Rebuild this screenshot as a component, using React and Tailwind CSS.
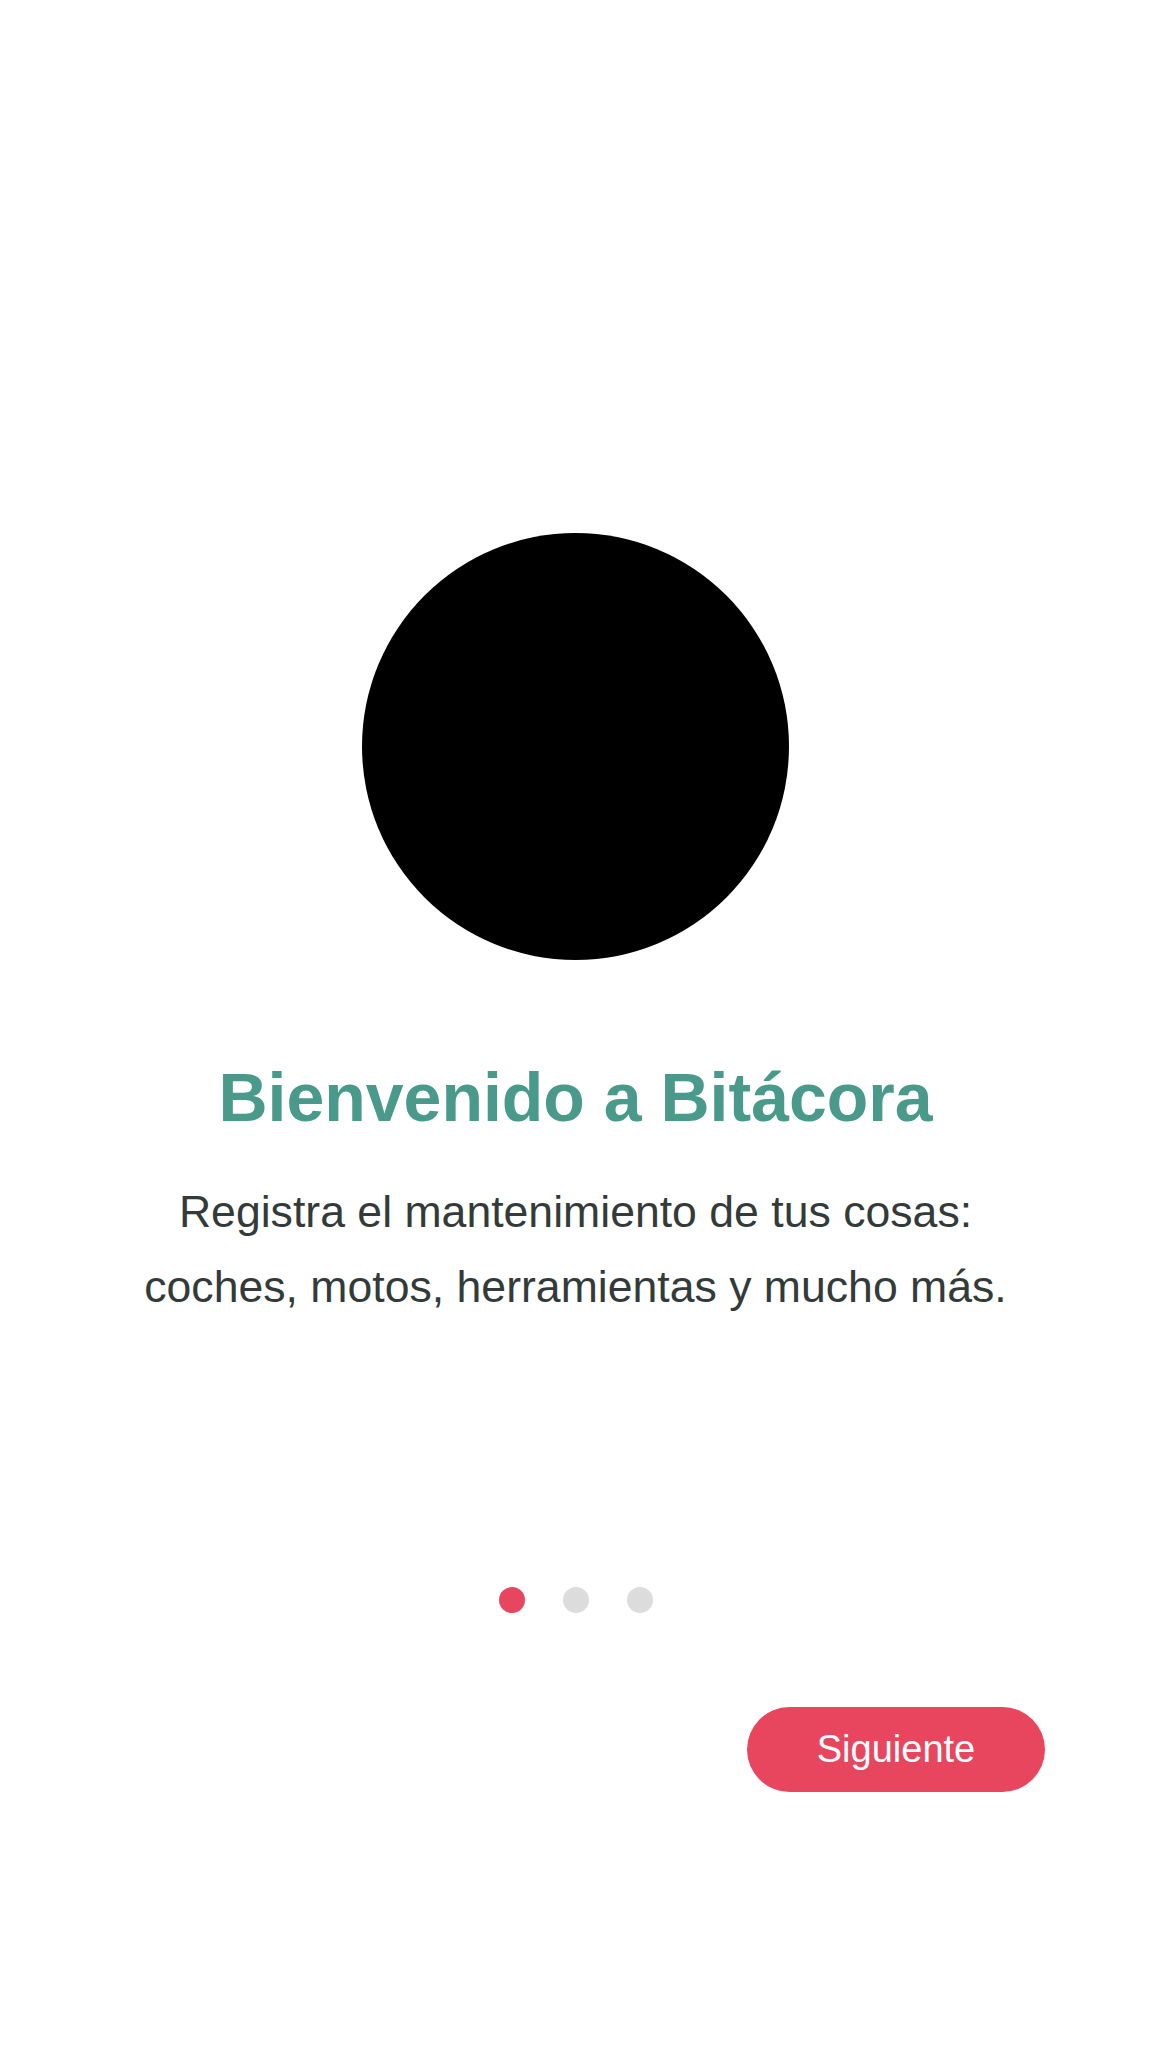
import React from 'react';

function Dots({ active = 0, count = 3 }) {
  return (
    <div className="flex justify-center gap-[38px]">
      {Array.from({ length: count }).map((_, i) => (
        <span
          key={i}
          className={
            i === active
              ? 'block w-[26px] h-[26px] rounded-full bg-[#e8465f]'
              : 'block w-[26px] h-[26px] rounded-full bg-[#dcdcdc]'
          }
        />
      ))}
    </div>
  );
}

export default function App() {
  return (
    <div
      className="w-full h-[2047px] bg-white flex flex-col items-stretch"
      style={{ fontFamily: '"Liberation Sans", Arial, sans-serif' }}
    >
      {/* Slide */}
      <div className="flex flex-col items-center pt-[533px]">
        <div className="w-[427px] h-[427px] rounded-full bg-black" />
        <h1 className="mt-[96px] text-[68px] leading-[82px] font-bold text-[#4a9a8b] text-center">
          Bienvenido a Bitácora
        </h1>
        <p className="mt-[36px] text-[44.6px] leading-[75px] text-[#333a3a] text-center">
          Registra el mantenimiento de tus cosas:
          <br />
          coches, motos, herramientas y mucho más.
        </p>
      </div>

      {/* Indicator */}
      <div className="mt-[263px]">
        <Dots active={0} />
      </div>

      {/* Actions */}
      <div className="mt-[94px] flex justify-end pr-[106px]">
        <button className="w-[298px] h-[85px] rounded-full bg-[#e8465f] text-white text-[38px] flex items-center justify-center">
          Siguiente
        </button>
      </div>
    </div>
  );
}
